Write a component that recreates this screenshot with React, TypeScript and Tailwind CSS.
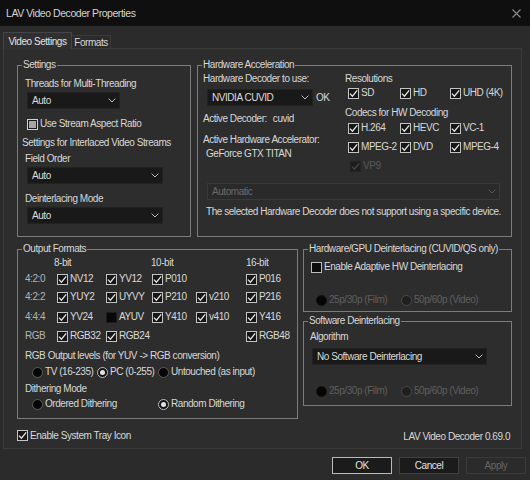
import React from "react";

type BoxKind = "normal" | "disabled" | "dark" | "mixed" | "empty";

function Box({ checked = false, kind = "normal" }: { checked?: boolean; kind?: BoxKind }) {
  let cls = "border-[#c4c4c4] bg-[#161616]";
  if (kind === "disabled") cls = "border-[#242424] bg-[#1d1d1d]";
  if (kind === "dark") cls = "border-[#1c1c1c] bg-[#080808]";
  if (kind === "empty") cls = "border-[#bdbdbd] bg-[#0c0c0c]";
  if (kind === "mixed") cls = "border-[#d2d2d2] bg-[#1a1a1a] p-[1px]";
  return (
    <span className={`w-[11px] h-[11px] shrink-0 border flex items-center justify-center ${cls}`}>
      {checked && (
        <svg width="9" height="9" viewBox="0 0 9 9">
          <path
            d="M1 4.6 L3.4 7.2 L8.2 1.4"
            fill="none"
            stroke={kind === "disabled" ? "#474747" : "#e4e4e4"}
            strokeWidth="1.3"
          />
        </svg>
      )}
      {kind === "mixed" && <span className="block w-full h-full bg-[#a6a6a6]" />}
    </span>
  );
}

function Check({
  label,
  checked = true,
  kind = "normal",
  className = "",
}: {
  label: string;
  checked?: boolean;
  kind?: BoxKind;
  className?: string;
}) {
  return (
    <div className={`flex items-center gap-[2px] h-[14px] whitespace-nowrap ${className}`}>
      <Box checked={checked} kind={kind} />
      <span className={kind === "disabled" ? "text-[#595959]" : ""}>{label}</span>
    </div>
  );
}

type RadioKind = "off" | "on" | "disFilled" | "disRing";

function Radio({ label, kind }: { label: string; kind: RadioKind }) {
  let circle: React.ReactNode;
  if (kind === "on") {
    circle = (
      <span className="w-[11px] h-[11px] shrink-0 rounded-full border border-[#bdbdbd] bg-[#141414] flex items-center justify-center">
        <span className="w-[5px] h-[5px] rounded-full bg-[#e2e2e2]" />
      </span>
    );
  } else if (kind === "off") {
    circle = <span className="w-[11px] h-[11px] shrink-0 rounded-full border border-[#5e5e5e] bg-[#070707]" />;
  } else if (kind === "disFilled") {
    circle = <span className="w-[11px] h-[11px] shrink-0 rounded-full border border-[#121212] bg-[#050505]" />;
  } else {
    circle = <span className="w-[11px] h-[11px] shrink-0 rounded-full border border-[#4a4a4a] bg-[#1f1f1f]" />;
  }
  const dis = kind === "disFilled" || kind === "disRing";
  return (
    <div className="flex items-center gap-[2px] h-[14px] whitespace-nowrap">
      {circle}
      <span className={dis ? "text-[#5f5f5f]" : ""}>{label}</span>
    </div>
  );
}

function Drop({
  text,
  w,
  disabled = false,
  className = "",
}: {
  text: string;
  w: string;
  disabled?: boolean;
  className?: string;
}) {
  return (
    <div
      className={`h-[17px] shrink-0 flex items-center justify-between pl-[4px] pr-[3px] border ${
        disabled ? "bg-[#2a2a2a] border-[#393939]" : "bg-[#191919] border-[#222222]"
      } ${w} ${className}`}
    >
      <span className={disabled ? "text-[#6a6a6a]" : "text-[#dcdcdc]"}>{text}</span>
      <svg width="8" height="5" viewBox="0 0 8 5">
        <path
          d="M0.6 0.6 L4 4 L7.4 0.6"
          fill="none"
          stroke={disabled ? "#555555" : "#bdbdbd"}
          strokeWidth="1"
        />
      </svg>
    </div>
  );
}

function Group({
  title,
  className,
  children,
}: {
  title: string;
  className: string;
  children?: React.ReactNode;
}) {
  return (
    <div className={`relative shrink-0 border border-[#7c7c7c] ${className}`}>
      <span className="absolute left-[4px] top-[-8px] px-[1px] leading-[14px] bg-[#2d2d2d] whitespace-nowrap">
        {title}
      </span>
      {children}
    </div>
  );
}

function Btn({ label, kind }: { label: string; kind: "def" | "norm" | "dis" }) {
  const cls =
    kind === "def"
      ? "bg-[#1b1b1b] border-[#b9b9b9] text-[#e2e2e2]"
      : kind === "norm"
      ? "bg-[#1b1b1b] border-[#404040] text-[#e2e2e2]"
      : "bg-[#2b2b2b] border-[#3a3a3a] text-[#666666]";
  return (
    <div className={`w-[60px] h-[17px] border flex items-center justify-center ${cls}`}>{label}</div>
  );
}

export default function App() {
  return (
    <div className="w-[530px] h-[480px] overflow-hidden bg-[#2b2b2b] text-[#d8d8d8] text-[10px] tracking-[-0.45px] leading-[14px] [font-family:'Liberation_Sans',Arial,sans-serif] flex flex-col">
      {/* Title bar */}
      <div className="h-[26px] shrink-0 bg-[#0f0f0f] flex items-center justify-between pl-[6px] pr-[9px]">
        <span className="text-[10.5px] tracking-[-0.45px] text-[#d4d4d4]">LAV Video Decoder Properties</span>
        <svg width="9" height="9" viewBox="0 0 9 9">
          <path d="M0.5 0.5 L8.5 8.5 M8.5 0.5 L0.5 8.5" stroke="#8a8a8a" strokeWidth="1.1" />
        </svg>
      </div>

      <div className="pl-[3px] pr-[8px] flex flex-col">
        {/* Tabs */}
        <div className="h-[22px] flex items-end">
          <div className="relative z-10 h-[17px] -mb-[1px] w-[69px] border border-b-0 border-[#454545] bg-[#303030] flex items-center justify-center pt-[1px] text-[#e4e4e4] whitespace-nowrap">
            Video Settings
          </div>
          <div className="h-[13px] w-[39px] border border-b-0 border-l-0 border-[#3a3a3a] flex items-center justify-center pt-[1px] whitespace-nowrap">
            Formats
          </div>
        </div>

        {/* Tab pane */}
        <div className="h-[401px] border border-[#3b3b3b] bg-[#2d2d2d] pl-[13px] pt-[16px] flex flex-col">
          <div className="flex items-start gap-[6px]">
            <Group title="Settings" className="w-[174px] h-[172px]">
              <div className="flex flex-col items-start">
                <div className="mt-[11px] ml-[7px]">Threads for Multi-Threading</div>
                <Drop text="Auto" w="w-[93px]" className="mt-[1px] ml-[9px]" />
                <Check label="Use Stream Aspect Ratio" checked={false} kind="mixed" className="mt-[8px] ml-[9px]" />
                <div className="mt-[5px] ml-[4px] whitespace-nowrap">Settings for Interlaced Video Streams</div>
                <div className="mt-[2px] ml-[7px]">Field Order</div>
                <Drop text="Auto" w="w-[136px]" className="mt-[1px] ml-[9px]" />
                <div className="mt-[8px] ml-[7px]">Deinterlacing Mode</div>
                <Drop text="Auto" w="w-[136px]" className="mt-[1px] ml-[9px]" />
              </div>
            </Group>

            <Group title="Hardware Acceleration" className="w-[315px] h-[172px]">
              <div className="flex">
                <div className="w-[147px] flex flex-col items-start">
                  <div className="mt-[6px] ml-[5px] whitespace-nowrap">Hardware Decoder to use:</div>
                  <div className="mt-[3px] ml-[9px] flex items-center gap-[3px]">
                    <Drop text="NVIDIA CUVID" w="w-[106px]" />
                    <span>OK</span>
                  </div>
                  <div className="mt-[6px] ml-[5px] flex gap-[6px]">
                    <span>Active Decoder:</span>
                    <span>cuvid</span>
                  </div>
                  <div className="mt-[7px] ml-[5px] whitespace-nowrap">Active Hardware Accelerator:</div>
                  <div className="ml-[8px] leading-[13px]">GeForce GTX TITAN</div>
                </div>
                <div className="flex flex-col">
                  <div className="mt-[6px]">Resolutions</div>
                  <div className="pl-[3px] grid grid-cols-[52px_50px_auto]">
                    <Check label="SD" />
                    <Check label="HD" />
                    <Check label="UHD (4K)" />
                  </div>
                  <div className="mt-[6px] whitespace-nowrap">Codecs for HW Decoding</div>
                  <div className="mt-[1px] pl-[3px] grid grid-cols-[52px_50px_auto]">
                    <Check label="H.264" />
                    <Check label="HEVC" />
                    <Check label="VC-1" />
                  </div>
                  <div className="mt-[5px] pl-[3px] grid grid-cols-[52px_50px_auto]">
                    <Check label="MPEG-2" />
                    <Check label="DVD" />
                    <Check label="MPEG-4" />
                  </div>
                  <Check label="VP9" kind="disabled" className="mt-[5px] ml-[5px]" />
                </div>
              </div>
              <Drop text="Automatic" w="w-[293px]" disabled className="mt-[10px] ml-[9px]" />
              <div className="mt-[5px] ml-[8px] whitespace-nowrap">
                The selected Hardware Decoder does not support using a specific device.
              </div>
            </Group>
          </div>

          <div className="mt-[12px] flex items-start gap-[5px]">
            <Group title="Output Formats" className="w-[281px] h-[170px]">
              <div className="pl-[7px] flex flex-col">
                <div className="mt-[6px] grid grid-cols-[32px_49px_46px_44px_50px_auto]">
                  <span />
                  <span className="-ml-[3px]">8-bit</span>
                  <span />
                  <span className="-ml-[1px]">10-bit</span>
                  <span />
                  <span>16-bit</span>
                </div>
                <div className="mt-[2px] grid grid-cols-[32px_49px_46px_44px_50px_auto] items-center">
                  <span className="text-[#b4b4b4]">4:2:0</span>
                  <Check label="NV12" />
                  <Check label="YV12" />
                  <Check label="P010" />
                  <span />
                  <Check label="P016" />
                </div>
                <div className="mt-[4px] grid grid-cols-[32px_49px_46px_44px_50px_auto] items-center">
                  <span className="text-[#b4b4b4]">4:2:2</span>
                  <Check label="YUY2" />
                  <Check label="UYVY" />
                  <Check label="P210" />
                  <Check label="v210" />
                  <Check label="P216" />
                </div>
                <div className="mt-[6px] grid grid-cols-[32px_49px_46px_44px_50px_auto] items-center">
                  <span className="text-[#b4b4b4]">4:4:4</span>
                  <Check label="YV24" />
                  <Check label="AYUV" checked={false} kind="dark" />
                  <Check label="Y410" />
                  <Check label="v410" />
                  <Check label="Y416" />
                </div>
                <div className="mt-[5px] grid grid-cols-[32px_49px_46px_44px_50px_auto] items-center">
                  <span className="text-[#b4b4b4]">RGB</span>
                  <Check label="RGB32" />
                  <Check label="RGB24" />
                  <span />
                  <span />
                  <Check label="RGB48" />
                </div>
                <div className="mt-[6px] whitespace-nowrap">RGB Output levels (for YUV -&gt; RGB conversion)</div>
                <div className="mt-[2px] pl-[7px] grid grid-cols-[65px_61px_auto]">
                  <Radio label="TV (16-235)" kind="off" />
                  <Radio label="PC (0-255)" kind="on" />
                  <Radio label="Untouched (as input)" kind="off" />
                </div>
                <div className="mt-[3px]">Dithering Mode</div>
                <div className="mt-[1px] pl-[7px] grid grid-cols-[126px_auto]">
                  <Radio label="Ordered Dithering" kind="off" />
                  <Radio label="Random Dithering" kind="on" />
                </div>
              </div>
            </Group>

            <div className="flex flex-col gap-[9px]">
              <Group title="Hardware/GPU Deinterlacing (CUVID/QS only)" className="w-[209px] h-[63px]">
                <Check
                  label="Enable Adaptive HW Deinterlacing"
                  checked={false}
                  kind="empty"
                  className="mt-[10px] ml-[7px]"
                />
                <div className="mt-[19px] pl-[12px] grid grid-cols-[85px_auto]">
                  <Radio label="25p/30p (Film)" kind="disFilled" />
                  <Radio label="50p/60p (Video)" kind="disRing" />
                </div>
              </Group>
              <Group title="Software Deinterlacing" className="w-[209px] h-[85px]">
                <div className="mt-[8px] ml-[6px]">Algorithm</div>
                <Drop text="No Software Deinterlacing" w="w-[175px]" className="mt-[4px] ml-[8px]" />
                <div className="mt-[19px] pl-[12px] grid grid-cols-[85px_auto]">
                  <Radio label="25p/30p (Film)" kind="disFilled" />
                  <Radio label="50p/60p (Video)" kind="disRing" />
                </div>
              </Group>
            </div>
          </div>

          <div className="mt-[8px] pr-[11px] flex items-center justify-between">
            <Check label="Enable System Tray Icon" kind="normal" />
            <span className="mt-[3px]">LAV Video Decoder 0.69.0</span>
          </div>
        </div>
      </div>

      {/* Buttons */}
      <div className="mt-[8px] pr-[4px] flex justify-end gap-[7px]">
        <Btn label="OK" kind="def" />
        <Btn label="Cancel" kind="norm" />
        <Btn label="Apply" kind="dis" />
      </div>
    </div>
  );
}
